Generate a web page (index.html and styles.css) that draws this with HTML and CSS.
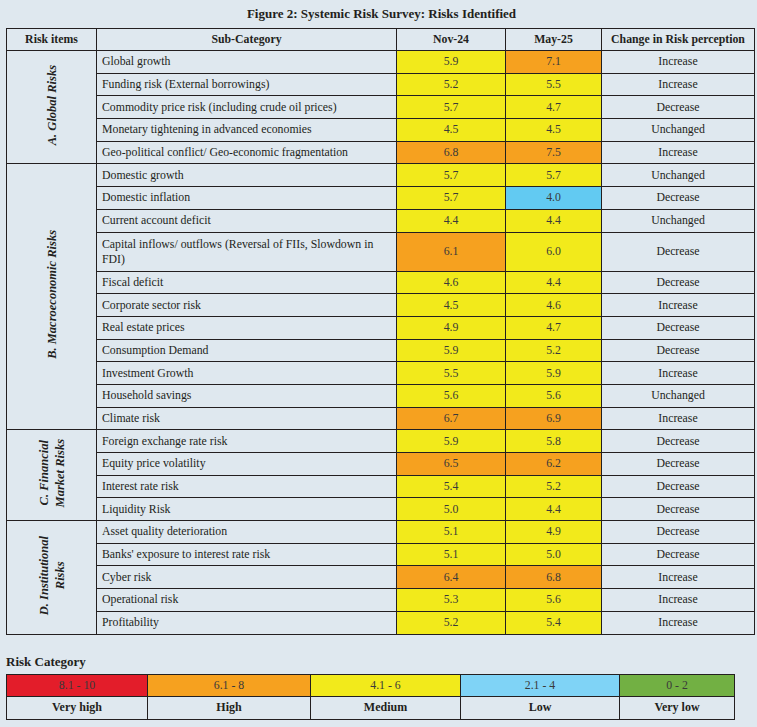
FILE: index.html
```html
<!DOCTYPE html>
<html>
<head>
<meta charset="utf-8">
<link rel="stylesheet" href="styles.css">
</head>
<body>
<div class="page">
  <h1 class="title">Figure 2: Systemic Risk Survey: Risks Identified</h1>
  <table class="risk">
    <colgroup>
      <col class="c-item"><col class="c-sub"><col class="c-nov"><col class="c-may"><col class="c-chg">
    </colgroup>
    <thead>
      <tr><th>Risk items</th><th>Sub-Category</th><th>Nov-24</th><th>May-25</th><th>Change in Risk perception</th></tr>
    </thead>
    <tbody>
      <tr><td class="grp" rowspan="5"><span class="vlabel">A. Global Risks</span></td><td class="sub">Global growth</td><td class="num y">5.9</td><td class="num o">7.1</td><td class="chg">Increase</td></tr>
      <tr><td class="sub">Funding risk (External borrowings)</td><td class="num y">5.2</td><td class="num y">5.5</td><td class="chg">Increase</td></tr>
      <tr><td class="sub">Commodity price risk (including crude oil prices)</td><td class="num y">5.7</td><td class="num y">4.7</td><td class="chg">Decrease</td></tr>
      <tr><td class="sub">Monetary tightening in advanced economies</td><td class="num y">4.5</td><td class="num y">4.5</td><td class="chg">Unchanged</td></tr>
      <tr><td class="sub">Geo-political conflict/ Geo-economic fragmentation</td><td class="num o">6.8</td><td class="num o">7.5</td><td class="chg">Increase</td></tr>

      <tr><td class="grp" rowspan="11"><span class="vlabel">B. Macroeconomic Risks</span></td><td class="sub">Domestic growth</td><td class="num y">5.7</td><td class="num y">5.7</td><td class="chg">Unchanged</td></tr>
      <tr><td class="sub">Domestic inflation</td><td class="num y">5.7</td><td class="num b">4.0</td><td class="chg">Decrease</td></tr>
      <tr><td class="sub">Current account deficit</td><td class="num y">4.4</td><td class="num y">4.4</td><td class="chg">Unchanged</td></tr>
      <tr class="tall"><td class="sub">Capital inflows/ outflows (Reversal of FIIs, Slowdown in FDI)</td><td class="num o">6.1</td><td class="num y">6.0</td><td class="chg">Decrease</td></tr>
      <tr><td class="sub">Fiscal deficit</td><td class="num y">4.6</td><td class="num y">4.4</td><td class="chg">Decrease</td></tr>
      <tr><td class="sub">Corporate sector risk</td><td class="num y">4.5</td><td class="num y">4.6</td><td class="chg">Increase</td></tr>
      <tr><td class="sub">Real estate prices</td><td class="num y">4.9</td><td class="num y">4.7</td><td class="chg">Decrease</td></tr>
      <tr><td class="sub">Consumption Demand</td><td class="num y">5.9</td><td class="num y">5.2</td><td class="chg">Decrease</td></tr>
      <tr><td class="sub">Investment Growth</td><td class="num y">5.5</td><td class="num y">5.9</td><td class="chg">Increase</td></tr>
      <tr><td class="sub">Household savings</td><td class="num y">5.6</td><td class="num y">5.6</td><td class="chg">Unchanged</td></tr>
      <tr><td class="sub">Climate risk</td><td class="num o">6.7</td><td class="num o">6.9</td><td class="chg">Increase</td></tr>

      <tr><td class="grp" rowspan="4"><span class="vlabel">C. Financial<br>Market Risks</span></td><td class="sub">Foreign exchange rate risk</td><td class="num y">5.9</td><td class="num y">5.8</td><td class="chg">Decrease</td></tr>
      <tr><td class="sub">Equity price volatility</td><td class="num o">6.5</td><td class="num o">6.2</td><td class="chg">Decrease</td></tr>
      <tr><td class="sub">Interest rate risk</td><td class="num y">5.4</td><td class="num y">5.2</td><td class="chg">Decrease</td></tr>
      <tr><td class="sub">Liquidity Risk</td><td class="num y">5.0</td><td class="num y">4.4</td><td class="chg">Decrease</td></tr>

      <tr><td class="grp" rowspan="5"><span class="vlabel">D. Institutional<br>Risks</span></td><td class="sub">Asset quality deterioration</td><td class="num y">5.1</td><td class="num y">4.9</td><td class="chg">Decrease</td></tr>
      <tr><td class="sub">Banks' exposure to interest rate risk</td><td class="num y">5.1</td><td class="num y">5.0</td><td class="chg">Decrease</td></tr>
      <tr><td class="sub">Cyber risk</td><td class="num o">6.4</td><td class="num o">6.8</td><td class="chg">Increase</td></tr>
      <tr><td class="sub">Operational risk</td><td class="num y">5.3</td><td class="num y">5.6</td><td class="chg">Increase</td></tr>
      <tr><td class="sub">Profitability</td><td class="num y">5.2</td><td class="num y">5.4</td><td class="chg">Increase</td></tr>
    </tbody>
  </table>

  <h2 class="legend-title">Risk Category</h2>
  <table class="legend">
    <colgroup>
      <col class="l1"><col class="l2"><col class="l3"><col class="l4"><col class="l5">
    </colgroup>
    <tr class="ranges"><td class="r">8.1 - 10</td><td class="o">6.1 - 8</td><td class="y">4.1 - 6</td><td class="lb">2.1 - 4</td><td class="g">0 - 2</td></tr>
    <tr class="names"><td>Very high</td><td>High</td><td>Medium</td><td>Low</td><td>Very low</td></tr>
  </table>
</div>
</body>
</html>
```

FILE: styles.css
```css
html, body {
  margin: 0;
  padding: 0;
  background: #dfe8ef;
}
body {
  font-family: "Liberation Serif", "Times New Roman", serif;
  color: #231f20;
  width: 757px;
  height: 727px;
  overflow: hidden;
}
.page {
  padding: 0 4px 0 6px;
}
.title {
  margin: 0;
  height: 28px;
  line-height: 28px;
  font-size: 13px;
  font-weight: bold;
  text-align: center;
  padding-left: 4px;
}
.risk {
  border-collapse: collapse;
  table-layout: fixed;
  width: 748px;
  font-size: 11.8px;
}
.c-item { width: 90px; }
.c-sub { width: 300px; }
.c-nov { width: 109px; }
.c-may { width: 96px; }
.c-chg { width: 153px; }
.risk th, .risk td {
  border: 1px solid #231f20;
  padding: 0;
}
.risk th {
  height: 21px;
  font-weight: bold;
  text-align: center;
  font-size: 11.8px;
}
.risk tbody tr {
  height: 22.7px;
}
.risk tbody tr.tall {
  height: 39px;
}
.sub {
  text-align: left;
  padding: 0 5px !important;
  line-height: 15px;
}
.num, .chg {
  text-align: center;
}
.num { color: #3a3a3a; }
.y { background: #f2ea1b; }
.o { background: #f6a11f; }
.b { background: #62caf2; }
.grp {
  text-align: center;
  vertical-align: middle;
}
.vlabel {
  display: inline-block;
  writing-mode: vertical-rl;
  transform: rotate(180deg);
  font-weight: bold;
  font-style: italic;
  font-size: 12.5px;
  line-height: 16px;
  text-align: center;
}
.legend-title {
  margin: 19px 0 0 0;
  font-size: 13px;
  font-weight: bold;
  height: 20px;
  line-height: 16px;
}
.legend {
  border-collapse: collapse;
  table-layout: fixed;
  width: 728px;
  font-size: 11.8px;
}
.l1 { width: 141px; }
.l2 { width: 163px; }
.l3 { width: 150px; }
.l4 { width: 159px; }
.l5 { width: 115px; }
.legend td {
  border: 1px solid #231f20;
  text-align: center;
  padding: 0;
}
.legend .ranges td {
  height: 21px;
  color: #3a3a3a;
}
.legend .names td {
  height: 22px;
  font-weight: bold;
  font-size: 12px;
}
.legend .r { background: #e31d2a; }
.legend .o { background: #f6a11f; }
.legend .y { background: #f2ea1b; }
.legend .lb { background: #7fd3f6; }
.legend .g { background: #72b043; }
```
